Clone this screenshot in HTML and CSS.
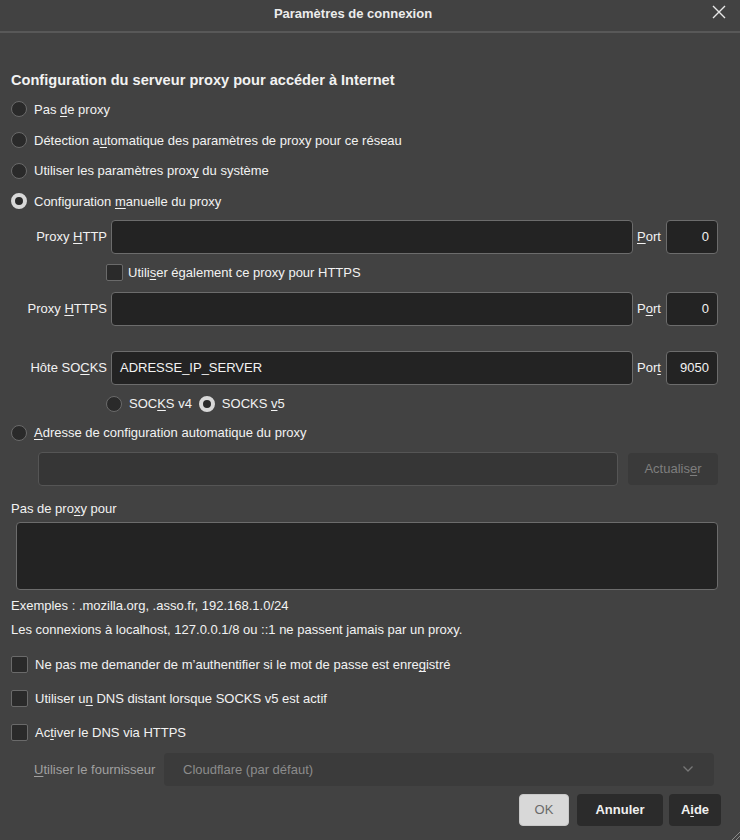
FILE: index.html
```html
<!DOCTYPE html>
<html lang="fr">
<head>
<meta charset="utf-8">
<title>Paramètres de connexion</title>
<link rel="stylesheet" href="styles.css">
</head>
<body>
<div class="dialog">
  <header class="titlebar">
    <span class="title">Paramètres de connexion</span>
    <svg class="close" width="14" height="14" viewBox="0 0 14 14"><path d="M1 1L13 13M13 1L1 13" stroke="#e8e8e8" stroke-width="1.4" fill="none"/></svg>
  </header>
  <main class="content">
    <h1 class="heading">Configuration du serveur proxy pour accéder à Internet</h1>
    <div class="radio-row"><span class="radio"></span><span>Pas <u>d</u>e proxy</span></div>
    <div class="radio-row"><span class="radio"></span><span>Détection a<u>u</u>tomatique des paramètres de proxy pour ce réseau</span></div>
    <div class="radio-row"><span class="radio"></span><span>Utiliser les paramètres prox<u>y</u> du système</span></div>
    <div class="radio-row"><span class="radio checked"></span><span>Configuration <u>m</u>anuelle du proxy</span></div>

    <div class="manual">
      <div class="field-row">
        <label class="flabel">Proxy <u>H</u>TTP</label>
        <div class="input"></div>
        <label class="plabel"><u>P</u>ort</label>
        <div class="input port">0</div>
      </div>
      <div class="check-row sub"><span class="check"></span><span>Utili<u>s</u>er également ce proxy pour HTTPS</span></div>
      <div class="field-row">
        <label class="flabel">Proxy <u>H</u>TTPS</label>
        <div class="input"></div>
        <label class="plabel">P<u>o</u>rt</label>
        <div class="input port">0</div>
      </div>
      <div class="field-row socks">
        <label class="flabel">Hôte SO<u>C</u>KS</label>
        <div class="input text">ADRESSE_IP_SERVER</div>
        <label class="plabel">Por<u>t</u></label>
        <div class="input port">9050</div>
      </div>
      <div class="socks-ver">
        <div class="radio-row inl"><span class="radio"></span><span>SOC<u>K</u>S v4</span></div>
        <div class="radio-row inl"><span class="radio checked"></span><span>SOCKS <u>v</u>5</span></div>
      </div>
    </div>

    <div class="radio-row auto"><span class="radio"></span><span><u>A</u>dresse de configuration automatique du proxy</span></div>
    <div class="auto-row">
      <div class="input disabled"></div>
      <div class="btn disabled">Actualis<u>e</u>r</div>
    </div>

    <div class="noproxy-label">Pas de pro<u>x</u>y pour</div>
    <div class="textarea"></div>
    <p class="note first">Exemples : .mozilla.org, .asso.fr, 192.168.1.0/24</p>
    <p class="note">Les connexions à localhost, 127.0.0.1/8 ou ::1 ne passent jamais par un proxy.</p>

    <div class="options">
      <div class="check-row opt"><span class="check"></span><span>Ne pas me demander de m’authentifier si le mot de passe est enre<u>g</u>istré</span></div>
      <div class="check-row opt"><span class="check"></span><span>Utiliser u<u>n</u> DNS distant lorsque SOCKS v5 est actif</span></div>
      <div class="check-row opt"><span class="check"></span><span>Ac<u>t</u>iver le DNS via HTTPS</span></div>
    </div>

    <div class="provider-row">
      <label class="prov-label"><u>U</u>tiliser le fournisseur</label>
      <div class="select">
        <span>Cloudflare (par défaut)</span>
        <svg width="12" height="8" viewBox="0 0 12 8"><path d="M1.5 1.5L6 6L10.5 1.5" stroke="#777" stroke-width="1.3" fill="none"/></svg>
      </div>
    </div>

    <div class="buttons">
      <div class="btn ok">OK</div>
      <div class="btn dark cancel">Annuler</div>
      <div class="btn dark help">A<u>i</u>de</div>
    </div>
  </main>
  <svg class="grip" width="10" height="10" viewBox="0 0 10 10"><path d="M10 2L2 10M10 6L6 10" stroke="#8a8a8a" stroke-width="1" fill="none"/></svg>
</div>
</body>
</html>
```
FILE: styles.css
```css
html, body {
  margin: 0;
  padding: 0;
  background: #424242;
}
body {
  font-family: "Liberation Sans", Arial, sans-serif;
  font-size: 13px;
  color: #f2f2f2;
}
u { text-decoration-thickness: 1px; text-underline-offset: 2px; }
.dialog {
  width: 740px;
  height: 840px;
  position: relative;
  overflow: hidden;
}
.titlebar {
  height: 31px;
  border-bottom: 2px solid #585858;
  display: flex;
  align-items: center;
  justify-content: center;
  position: relative;
}
.title {
  font-size: 13px;
  font-weight: bold;
  color: #ececec;
  margin-top: -4px;
  margin-right: 34px;
}
.close {
  position: absolute;
  right: 14px;
  top: 5px;
}
.content {
  padding: 0 22px 0 11px;
}
.heading {
  font-size: 14.6px;
  font-weight: bold;
  margin: 37px 0 4px 0;
  height: 20px;
  line-height: 20px;
}
.radio-row {
  display: flex;
  align-items: center;
  gap: 7px;
  height: 30.7px;
}
.radio {
  width: 14px;
  height: 14px;
  border: 1px solid #6a6a6a;
  border-radius: 50%;
  background: #2a2a2a;
  box-sizing: content-box;
  flex: none;
}
.radio.checked {
  background: #2a2a2a;
  border: 4px solid #d8d8d8;
  width: 8px;
  height: 8px;
}
.manual { margin-top: 3px; }
.field-row {
  display: flex;
  align-items: center;
  height: 34px;
}
.flabel {
  width: 96px;
  text-align: right;
  padding-right: 4px;
  flex: none;
}
.input {
  height: 34px;
  box-sizing: border-box;
  border: 1px solid #6c6c6c;
  border-radius: 4px;
  background: #232323;
  flex: 1;
  display: flex;
  align-items: center;
}
.input.text { padding-left: 8px; }
.plabel {
  width: 33px;
  padding-left: 4px;
  box-sizing: border-box;
  flex: none;
}
.input.port {
  flex: none;
  width: 52px;
  justify-content: flex-end;
  padding-right: 8px;
}
.check-row {
  display: flex;
  align-items: center;
  gap: 5px;
}
.check {
  width: 15px;
  height: 15px;
  border: 1px solid #6a6a6a;
  border-radius: 2px;
  background: #2a2a2a;
  flex: none;
}
.check-row.sub {
  height: 38px;
  padding-left: 95px;
}
.field-row.socks { margin-top: 25px; }
.socks-ver {
  display: flex;
  padding-left: 95px;
  gap: 7px;
  height: 38px;
  align-items: center;
}
.radio-row.inl { height: auto; }
.radio-row.auto { height: 24px; margin-top: -2px; }
.auto-row {
  display: flex;
  align-items: center;
  gap: 10px;
  padding-left: 27px;
  margin-top: 7px;
}
.input.disabled {
  background: #363636;
  border-color: #555;
  height: 34px;
}
.btn {
  display: flex;
  align-items: center;
  justify-content: center;
  border-radius: 4px;
  height: 32px;
  box-sizing: border-box;
}
.btn.disabled {
  width: 90px;
  background: #3a3a3a;
  color: #7e7e7e;
}
.noproxy-label {
  margin-top: 16px;
  height: 14px;
  line-height: 14px;
}
.textarea {
  margin: 6px 0 0 5px;
  height: 68px;
  box-sizing: border-box;
  border: 1px solid #6c6c6c;
  border-radius: 4px;
  background: #232323;
}
.note {
  margin: 0;
  height: 24px;
  line-height: 24px;
}
.note.first { margin-top: 4px; }
.options { margin-top: 6px; }
.check-row.opt {
  height: 34px;
  gap: 7px;
}
.provider-row {
  display: flex;
  align-items: center;
  padding-left: 23px;
  margin-top: 3px;
  height: 33px;
}
.prov-label {
  color: #a0a0a0;
  width: 130px;
  flex: none;
}
.select {
  flex: 1;
  margin-right: 4px;
  height: 33px;
  background: #3b3b3b;
  border-radius: 4px;
  display: flex;
  align-items: center;
  justify-content: space-between;
  padding: 0 20px 0 19px;
  color: #8c8c8c;
}
.buttons {
  display: flex;
  justify-content: flex-end;
  margin-top: 8px;
  margin-right: -3px;
}
.btn.ok {
  width: 50px;
  background: #d8d8d8;
  color: #6a6a6a;
  border: 1px solid #c8c8c8;
}
.btn.dark {
  background: #2b2b2b;
  font-weight: bold;
  color: #f0f0f0;
}
.btn.cancel { width: 86px; margin-left: 8px; }
.btn.help { width: 52px; margin-left: 6px; }
.grip {
  position: absolute;
  right: 0;
  bottom: 0;
}
```
